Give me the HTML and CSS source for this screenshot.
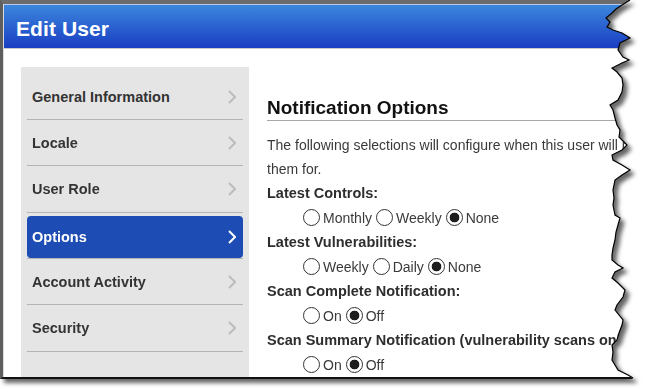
FILE: index.html
```html
<!DOCTYPE html>
<html>
<head>
<meta charset="utf-8">
<link rel="stylesheet" href="styles.css">
</head>
<body>
<div class="shot">
  <div class="frame">
    <div class="window">
      <header class="titlebar"><h1 class="title">Edit User</h1></header>
      <div class="main">
        <nav class="sidebar">
          <div class="item"><div class="item-inner"><span>General Information</span><svg class="chev" width="8" height="14" viewBox="0 0 8 14"><polyline points="1,1 7,7 1,13"/></svg></div></div>
          <div class="item"><div class="item-inner"><span>Locale</span><svg class="chev" width="8" height="14" viewBox="0 0 8 14"><polyline points="1,1 7,7 1,13"/></svg></div></div>
          <div class="item tall"><div class="item-inner"><span>User Role</span><svg class="chev" width="8" height="14" viewBox="0 0 8 14"><polyline points="1,1 7,7 1,13"/></svg></div></div>
          <div class="item active"><div class="item-inner"><span>Options</span><svg class="chev" width="8" height="14" viewBox="0 0 8 14"><polyline points="1,1 7,7 1,13"/></svg></div></div>
          <div class="item"><div class="item-inner"><span>Account Activity</span><svg class="chev" width="8" height="14" viewBox="0 0 8 14"><polyline points="1,1 7,7 1,13"/></svg></div></div>
          <div class="item tall"><div class="item-inner"><span>Security</span><svg class="chev" width="8" height="14" viewBox="0 0 8 14"><polyline points="1,1 7,7 1,13"/></svg></div></div>
        </nav>
        <section class="content">
          <h2 class="heading">Notification Options</h2>
          <p class="intro">The following selections will configure when this user will receive notifications and what they will receive<br>them for.</p>
          <div class="label">Latest Controls:</div>
          <div class="radios">
            <label class="opt"><input class="radio" type="radio" name="lc">Monthly</label>
            <label class="opt"><input class="radio" type="radio" name="lc">Weekly</label>
            <label class="opt"><input class="radio" type="radio" name="lc" checked>None</label>
          </div>
          <div class="label">Latest Vulnerabilities:</div>
          <div class="radios">
            <label class="opt"><input class="radio" type="radio" name="lv">Weekly</label>
            <label class="opt"><input class="radio" type="radio" name="lv">Daily</label>
            <label class="opt"><input class="radio" type="radio" name="lv" checked>None</label>
          </div>
          <div class="label">Scan Complete Notification:</div>
          <div class="radios">
            <label class="opt"><input class="radio" type="radio" name="sc">On</label>
            <label class="opt"><input class="radio" type="radio" name="sc" checked>Off</label>
          </div>
          <div class="label">Scan Summary Notification (vulnerability scans only):</div>
          <div class="radios">
            <label class="opt"><input class="radio" type="radio" name="ss">On</label>
            <label class="opt"><input class="radio" type="radio" name="ss" checked>Off</label>
          </div>
        </section>
      </div>
    </div>
  </div>
  <svg class="edge" width="648" height="389" viewBox="0 0 648 389">
    <polyline points="630,0 622,5 616,9 612,13 606,18 610,22 607,27 613,30 622,33 630,38 620,43 618,50 623,57 629,60 622,63 612,68 617,72 622,78 623,85 622,92 618,100 610,105 613,110 615,118 617,125 620,130 619,137 627,145 622,150 612,155 613,160 622,165 630,170 622,175 615,180 613,190 614,198 613,205 615,215 620,218 618,225 616,232 615,240 613,248 612,255 612,260 618,265 623,268 615,272 612,278 618,283 625,290 623,297 617,305 615,310 623,320 622,325 619,333 617,340 612,345 613,352 612,360 615,365 618,370 628,375 633,378"/>
  </svg>
</div>
</body>
</html>
```
FILE: styles.css
```css
html, body {
  margin: 0;
  padding: 0;
  background: #ffffff;
}
body {
  font-family: "Liberation Sans", Arial, sans-serif;
  width: 648px;
  height: 389px;
  overflow: hidden;
}
.shot {
  position: relative;
  width: 648px;
  height: 389px;
  filter: drop-shadow(4px 4px 2px rgba(0, 0, 0, 0.6));
}
.frame {
  width: 634px;
  height: 379px;
  box-sizing: border-box;
  border-top: 4px solid #6c6c6c;
  border-left: 3px solid #5e5e5e;
  border-bottom: 2px solid #111111;
  background: #ffffff;
  overflow: hidden;
  clip-path: polygon(0 0, 630px 0, 622px 5px, 616px 9px, 612px 13px, 606px 18px, 610px 22px, 607px 27px, 613px 30px, 622px 33px, 630px 38px, 620px 43px, 618px 50px, 623px 57px, 629px 60px, 622px 63px, 612px 68px, 617px 72px, 622px 78px, 623px 85px, 622px 92px, 618px 100px, 610px 105px, 613px 110px, 615px 118px, 617px 125px, 620px 130px, 619px 137px, 627px 145px, 622px 150px, 612px 155px, 613px 160px, 622px 165px, 630px 170px, 622px 175px, 615px 180px, 613px 190px, 614px 198px, 613px 205px, 615px 215px, 620px 218px, 618px 225px, 616px 232px, 615px 240px, 613px 248px, 612px 255px, 612px 260px, 618px 265px, 623px 268px, 615px 272px, 612px 278px, 618px 283px, 625px 290px, 623px 297px, 617px 305px, 615px 310px, 623px 320px, 622px 325px, 619px 333px, 617px 340px, 612px 345px, 613px 352px, 612px 360px, 615px 365px, 618px 370px, 628px 375px, 633px 379px, 0 379px);
}
.window {
  height: 100%;
  display: flex;
  flex-direction: column;
  border-left: 1px solid #dcdcdc;
  box-sizing: border-box;
}
.titlebar {
  height: 45px;
  box-sizing: border-box;
  border-top: 1px solid #b8c8ec;
  border-bottom: 1px solid #c9c9c9;
  background: linear-gradient(to bottom, #3c86dd 0%, #2a62d0 50%, #1a3ec2 100%);
  padding: 4px 0 0 12px;
  display: flex;
  align-items: center;
}
.title {
  margin: 0;
  color: #ffffff;
  font-size: 21px;
  font-weight: bold;
  letter-spacing: 0.1px;
}
.main {
  flex: 1;
  display: flex;
  padding: 18px 0 0 17px;
  min-height: 0;
}
.sidebar {
  width: 228px;
  flex: none;
  background: #e5e5e5;
  box-sizing: border-box;
  padding: 7px 6px 0 6px;
}
.item {
  border-bottom: 1px solid #b4b4b4;
}
.item-inner {
  height: 45px;
  display: flex;
  align-items: center;
  justify-content: space-between;
  padding: 0 7px 0 5px;
  font-size: 14.5px;
  font-weight: bold;
  color: #333333;
}
.item.tall .item-inner {
  height: 46px;
}
.chev {
  fill: none;
  stroke: #bcbcbc;
  stroke-width: 2;
}
.item.active {
  padding-top: 3px;
}
.item.active .item-inner {
  height: 42px;
  background: #1d4cb4;
  border-radius: 4px;
  color: #ffffff;
}
.item.active .chev {
  stroke: #ffffff;
}
.content {
  flex: 1;
  margin: 30px 0 0 18px;
  min-width: 0;
  white-space: nowrap;
}
.heading {
  margin: 0;
  font-size: 19px;
  line-height: 22px;
  padding-bottom: 1px;
  font-weight: bold;
  color: #111111;
  border-bottom: 1px solid #a8a8a8;
}
.intro {
  margin: 12px 0 0 0;
  font-size: 14px;
  line-height: 24px;
  color: #3a3a3a;
}
.label {
  font-size: 14.5px;
  line-height: 24px;
  font-weight: bold;
  color: #2e2e2e;
}
.radios {
  height: 25px;
  display: flex;
  align-items: center;
  padding-left: 32px;
}
.opt {
  display: flex;
  align-items: center;
  font-size: 14px;
  color: #3a3a3a;
}
.radio {
  appearance: none;
  -webkit-appearance: none;
  width: 17px;
  height: 17px;
  margin: 0 3px 0 4px;
  border: 1px solid #333333;
  border-radius: 50%;
  background: #ffffff;
  box-sizing: border-box;
}
.radio:checked {
  border: 1.5px solid #333333;
  background: radial-gradient(circle, #1e1e1e 0 4.5px, #ffffff 5.2px);
}
.edge {
  position: absolute;
  top: 0;
  left: 0;
  pointer-events: none;
}
.edge polyline {
  fill: none;
  stroke: #000000;
  stroke-width: 1.2;
}
```
